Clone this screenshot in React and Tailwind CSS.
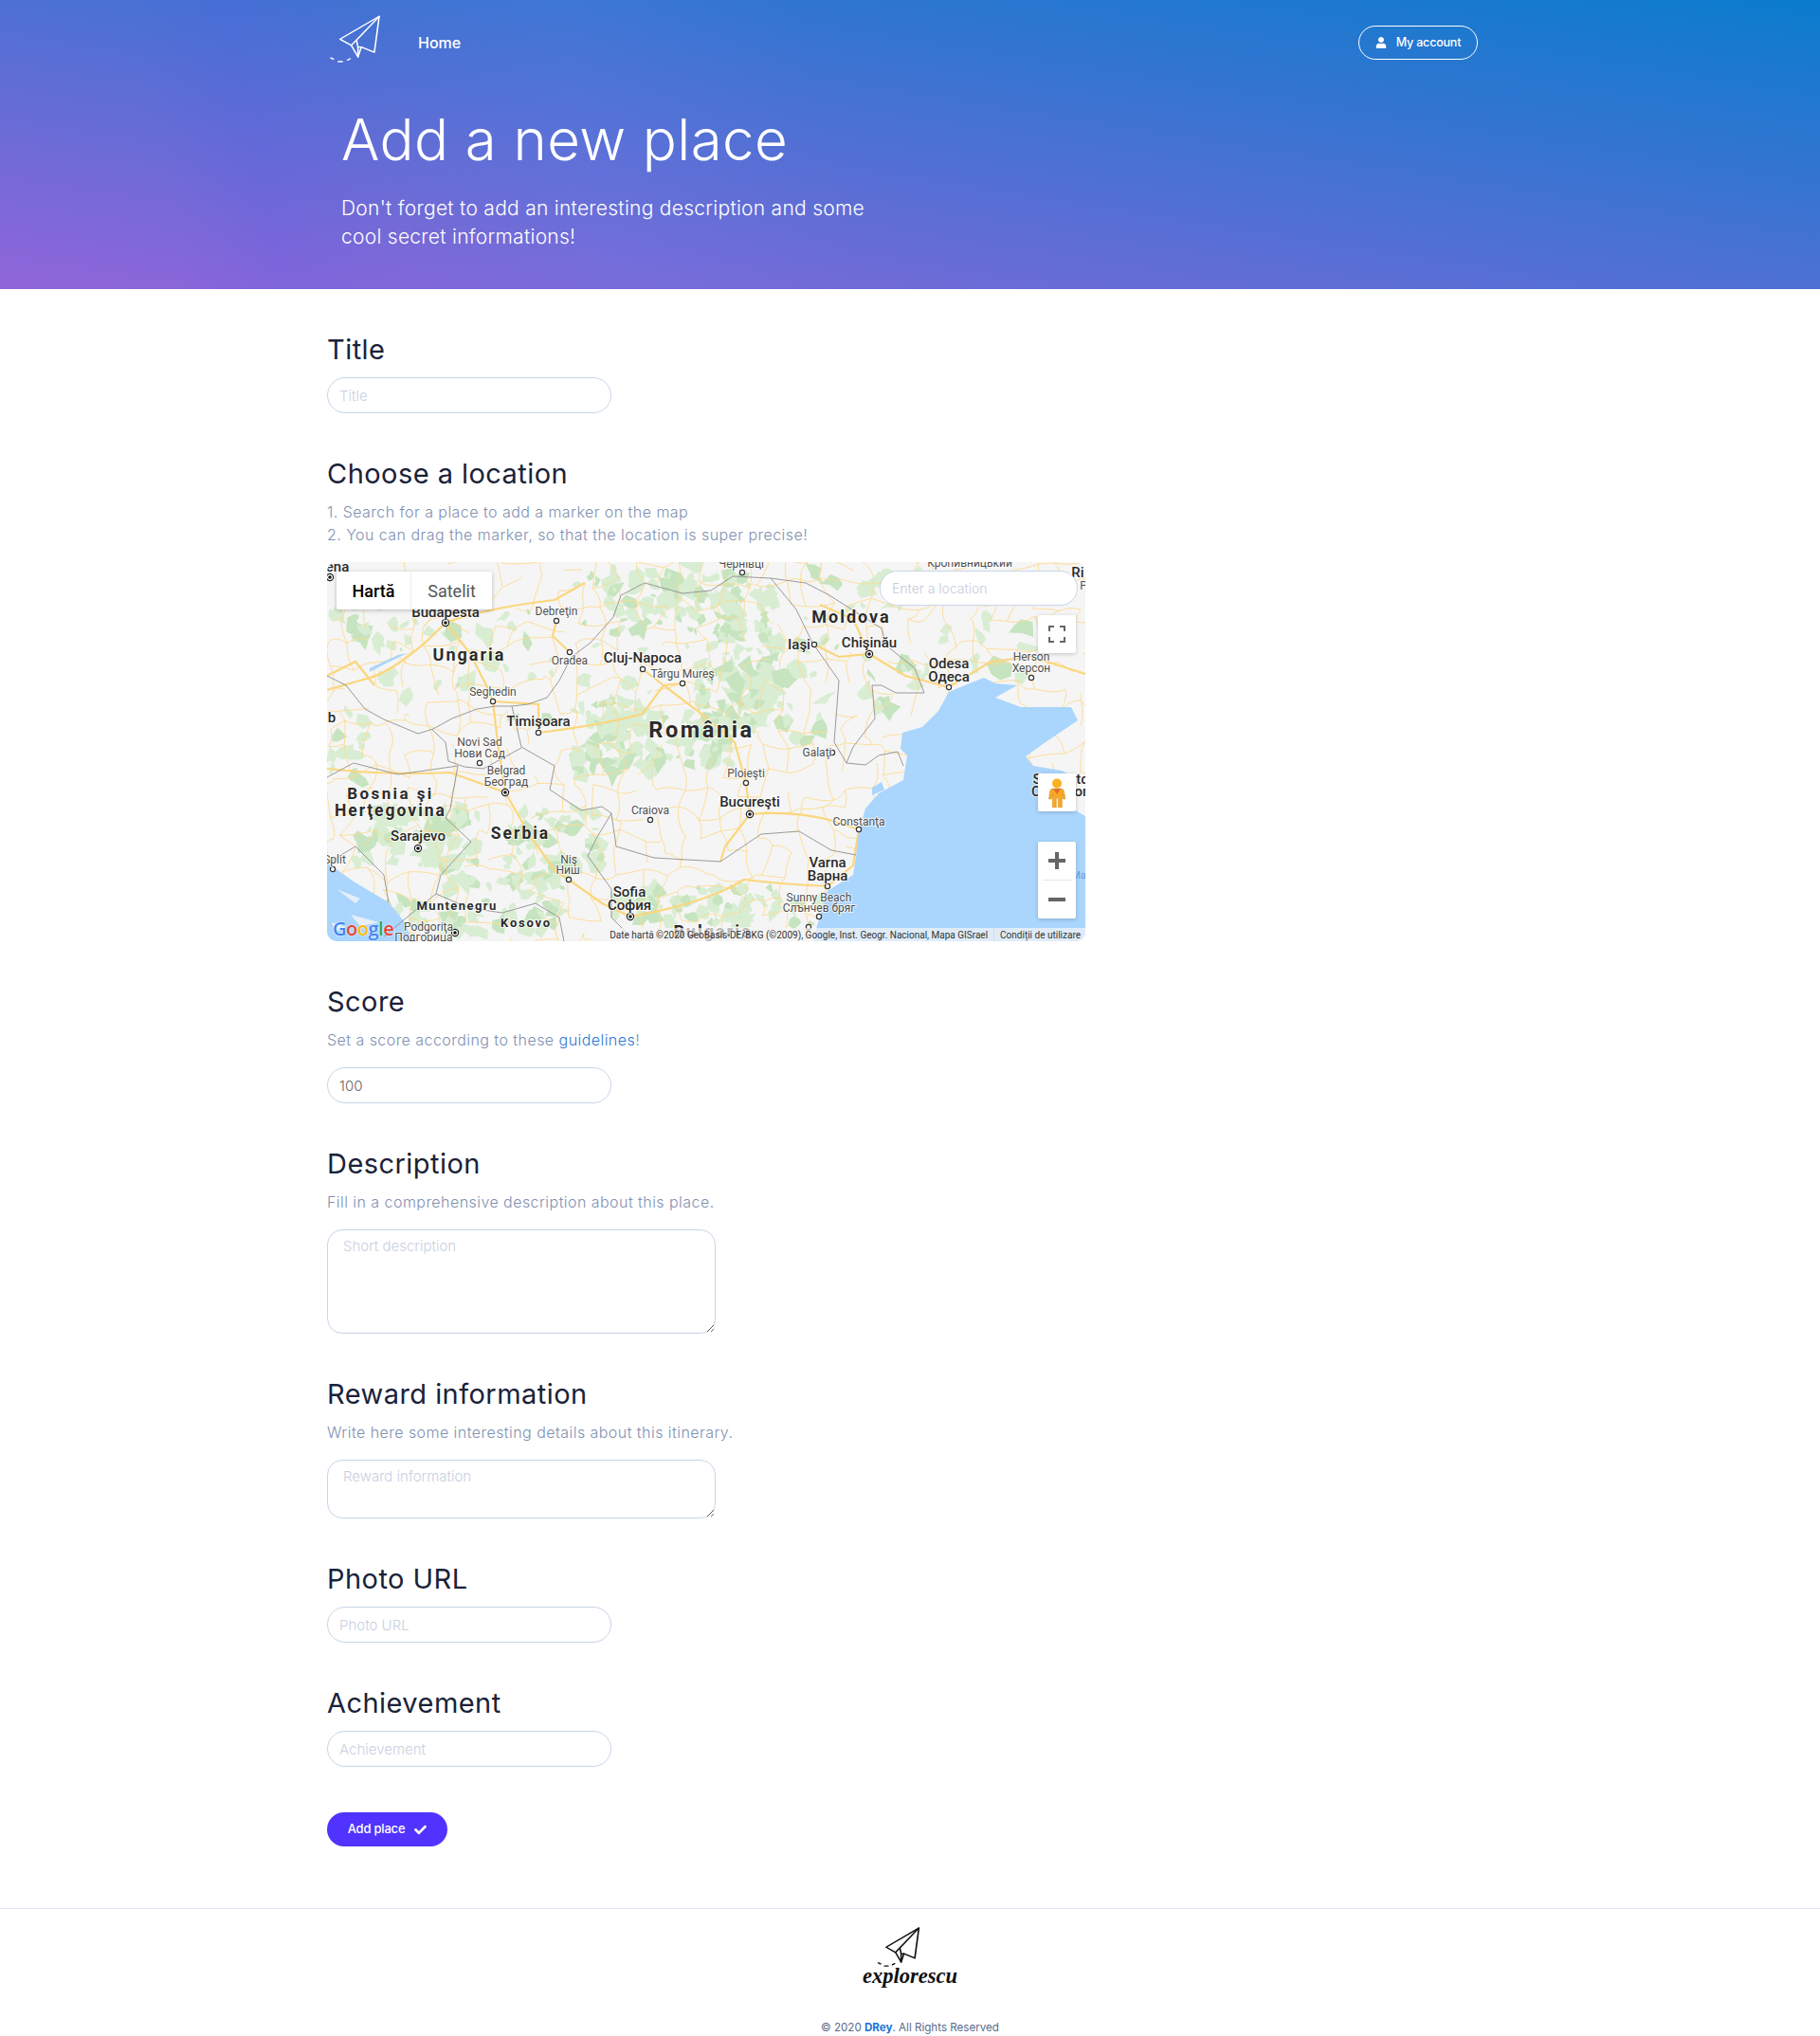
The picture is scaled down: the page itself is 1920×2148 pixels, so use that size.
import React from "react";
import { FaUser, FaCheck } from "react-icons/fa";

const F = { fontFamily: "Inter, 'Noto Sans', sans-serif" };

function rng(seed) {
  let s = seed;
  return () => {
    s = (s * 16807) % 2147483647;
    return (s - 1) / 2147483646;
  };
}

function patches() {
  const r = rng(4242);
  const clusters = [
    [370, 40, 70, 35, 70], [445, 70, 28, 50, 54], [430, 140, 40, 35, 60], [350, 190, 75, 28, 70], [290, 185, 30, 40, 40],
    [95, 290, 65, 30, 70], [240, 300, 50, 40, 56], [190, 360, 60, 30, 50], [390, 360, 90, 20, 56], [520, 370, 30, 14, 16],
    [80, 370, 30, 20, 12], [20, 200, 25, 40, 16], [50, 60, 45, 30, 20], [500, 130, 30, 60, 20], [600, 30, 60, 20, 14],
    [400, 100, 140, 100, 40], [150, 110, 110, 60, 24], [680, 90, 100, 30, 14], [590, 130, 40, 30, 12],
  ];
  const out = [];
  clusters.forEach(([cx, cy, rx, ry, n]) => {
    for (let i = 0; i < n; i++) {
      const x = cx + (r() * 2 - 1) * rx;
      const y = cy + (r() * 2 - 1) * ry;
      const size = 3 + r() * 10;
      const pts = [];
      const k = 5 + Math.floor(r() * 4);
      const rot = r() * 6.28;
      const sq = 0.4 + r() * 0.6;
      for (let j = 0; j < k; j++) {
        const a = (j / k) * Math.PI * 2;
        const d = size * (0.4 + r() * 1.0);
        const px = Math.cos(a) * d;
        const py = Math.sin(a) * d * sq;
        pts.push(`${(x + px * Math.cos(rot) - py * Math.sin(rot)).toFixed(1)},${(y + px * Math.sin(rot) + py * Math.cos(rot)).toFixed(1)}`);
      }
      out.push({ pts: pts.join(" "), c: r() > 0.65 ? "#c6e4bf" : "#d8edd2" });
    }
  });
  return out;
}

function network() {
  const r = rng(977);
  const step = 22;
  const nodes = {};
  for (let i = 0; i <= 37; i++) for (let j = 0; j <= 19; j++) {
    nodes[i + "," + j] = [i * step + (r() - 0.5) * 18, j * step + (r() - 0.5) * 18];
  }
  const out = [];
  for (let i = 0; i <= 37; i++) for (let j = 0; j <= 19; j++) {
    const a = nodes[i + "," + j];
    [[i + 1, j], [i, j + 1]].forEach(([u, v]) => {
      const b = nodes[u + "," + v];
      if (b && r() < 0.62) {
        const mx = (a[0] + b[0]) / 2 + (r() - 0.5) * 14;
        const my = (a[1] + b[1]) / 2 + (r() - 0.5) * 14;
        out.push(`M${a[0].toFixed(1)} ${a[1].toFixed(1)}Q${mx.toFixed(1)} ${my.toFixed(1)} ${b[0].toFixed(1)} ${b[1].toFixed(1)}`);
      }
    });
  }
  return out;
}

const PATCHES = patches();
const NET = network();

const MAIN = [
  "M125 64 Q105 85 85 100 Q60 118 45 122 L0 135",
  "M125 64 L150 95 L168 130 L175 147 L180 190 L188 243",
  "M125 64 Q170 48 240 40 L272 22",
  "M242 62 L238 78 L256 95",
  "M0 218 Q60 225 130 222 L188 243",
  "M188 243 L215 290 L240 325 L255 335 L290 360 L320 374",
  "M175 147 L223 150 L223 180",
  "M223 180 Q290 172 333 160 L355 130 L375 128",
  "M333 113 L355 130",
  "M446 266 L442 233 L430 190 L395 160 L355 130",
  "M446 266 Q490 262 530 272 L561 282",
  "M446 266 L420 300 L415 316",
  "M528 342 Q480 340 440 335 Q400 360 320 374",
  "M514 87 L540 100 L572 97 L610 120 L656 132",
  "M656 132 L700 105 L743 100 L800 118",
  "M572 97 L555 60 L520 45",
  "M561 282 L555 320 L528 342",
  "M0 120 L30 105 L50 130",
];
const BORDERS = [
  "M310 35 L302 58 L278 85 L258 100 L245 125 L232 143 L212 150 L195 152 L178 152 L158 155 L132 165 L112 176 L96 181 L60 166 L40 155 L20 130 L0 120",
  "M310 35 L335 22 L375 33 L405 30 L428 15 L468 17",
  "M468 17 L495 50 L512 85 L540 125 L535 190 L548 212 L568 214 L582 204 L602 200 L608 215",
  "M468 17 L505 22 L530 35 L585 70 L590 88 L620 112 L630 138 L600 138 L585 130 L575 130 L578 165 L555 195 L548 212",
  "M110 176 L125 190 L128 210 L145 216 L165 218 L205 196",
  "M195 152 L205 195 L240 215 L235 240 L268 262 L290 258 L300 265",
  "M0 227 L28 212 L75 224 L138 215",
  "M138 215 L130 260 L125 270 L152 295 L120 330 L115 350 L150 365 L185 370 L220 360 L245 375 L250 400",
  "M300 265 L285 290 L275 310 L300 345 L300 375 L325 400",
  "M300 265 L305 300 L345 312 L415 316 L458 287 L498 284 L532 304 L558 309",
  "M60 395 L90 370 L115 350",
  "M0 318 L30 300 L60 330 L65 359",
];
const SEA = "M512 400 L528 347 L555 330 L558 310 L561 284 L568 260 L582 244 L608 230 L612 204 L605 197 L607 180 L628 174 L645 157 L656 137 L680 127 L693 122 L705 128 L728 130 L705 143 L732 153 L785 153 L792 167 L755 192 L737 205 L745 215 L775 220 L790 228 L790 262 L800 268 L800 400 Z";

const L = [
  ["ena", 11, 5, 2], ["b", 5, 164, 2],
  ["Budapesta", 125, 53, 2], ["Debreţin", 242, 52, 0], ["Oradea", 256, 104, 0], ["Cluj-Napoca", 333, 101, 2],
  ["Târgu Mureş", 375, 118, 0], ["Seghedin", 175, 137, 0], ["Timişoara", 223, 168, 2], ["Novi Sad", 161, 190, 0],
  ["Нови Сад", 161, 202, 0], ["Belgrad", 189, 220, 0], ["Београд", 189, 232, 0], ["Craiova", 341, 262, 0],
  ["Sarajevo", 96, 289, 2], ["Split", 8, 314, 0], ["Niş", 255, 314, 0], ["Ниш", 254, 325, 0], ["Sofia", 319, 348, 2],
  ["София", 319, 362, 2], ["Podgoriţa", 107, 385, 0], ["Подгорица", 102, 396, 0],
  ["Чернівці", 437, 2, 0], ["Кропивницький", 678, 1, 0], ["Iaşi", 498, 87, 2], ["Chişinău", 572, 85, 2],
  ["Odesa", 656, 107, 2], ["Одеса", 656, 121, 2], ["Herson", 743, 100, 0], ["Херсон", 743, 112, 0],
  ["Galaţi", 517, 201, 0], ["Ploieşti", 442, 223, 0], ["Bucureşti", 446, 253, 2], ["Constanţa", 561, 274, 0],
  ["Varna", 528, 317, 2], ["Варна", 528, 331, 2], ["Sunny Beach", 519, 354, 0], ["Слънчев бряг", 519, 365, 0],
  ["Ri", 792, 11, 2], ["P", 798, 25, 0], ["S", 749, 229, 2], ["to", 797, 229, 2], ["C", 748, 242, 2], ["on", 797, 242, 2],
];
const B = [
  ["Ungaria", 150, 98, 18, 2], ["România", 395, 177, 23.5, 2.6], ["Bosnia şi", 67, 244, 17, 2.4], ["Herţegovina", 67, 262, 17.5, 2],
  ["Serbia", 204, 286, 17.5, 2], ["Muntenegru", 137, 362, 13, 1.4], ["Kosovo", 210, 380, 13, 1.8], ["Moldova", 553, 58, 18, 2], ["Bulgaria", 407, 390, 18, 2],
];
const HOLLOW = [[242, 62], [256, 95], [333, 113], [375, 128], [175, 147], [223, 180], [161, 212], [341, 272], [6, 324], [255, 335], [442, 233], [533, 201], [514, 87], [561, 282], [528, 342], [519, 374], [508, 385], [743, 122], [656, 132], [438, 11]];
const CAP = [[3, 16], [125, 64], [188, 243], [96, 302], [320, 374], [135, 391], [572, 97], [446, 266]];

function MapArt() {
  return (
    <svg viewBox="0 0 800 400" className="block w-full h-full" style={{ fontFamily: "Roboto, sans-serif" }}>
      <rect width="800" height="400" fill="#f5f5f5" />
      {PATCHES.map((p, i) => <polygon key={i} points={p.pts} fill={p.c} />)}
      <path d={NET.join("")} fill="none" stroke="#fddb92" strokeWidth="0.9" />
      <path d={MAIN.join("")} fill="none" stroke="#fcd67c" strokeWidth="2.2" />
      <path d="M45 112 L75 98 L85 96 L60 108 L45 116 Z" fill="#aad5fd" />
      <path d={SEA} fill="#aad5fd" />
      <path d="M0 317 L28 337 L65 359 L82 380 L90 400 L0 400 Z" fill="#aad5fd" />
      <path d="M10 345 L35 355 L30 360 Z M25 372 L55 380 L35 384 Z M5 380 L20 385 L8 390 Z" fill="#f5f5f5" opacity="0.8" />
      <path d="M575 238 L585 232 L588 240 L575 246 Z" fill="#aad5fd" />
      <path d={BORDERS.join("")} fill="none" stroke="#909090" strokeWidth="0.9" />
      {HOLLOW.map(([x, y], i) => <circle key={i} cx={x} cy={y} r="2.6" fill="#fff" stroke="#333" strokeWidth="1.2" />)}
      {CAP.map(([x, y], i) => (
        <g key={i}><circle cx={x} cy={y} r="3.6" fill="#fff" stroke="#222" strokeWidth="1.2" /><circle cx={x} cy={y} r="1.8" fill="#111" /></g>
      ))}
      {L.map(([t, x, y, k], i) => (
        <text key={i} x={x} y={y} dy="0.35em" textAnchor="middle" fontSize={k === 2 ? 15 : 12} fontWeight={k === 2 ? 500 : 400}
          fill={k === 2 ? "#2a2a2a" : "#505050"} stroke="#fff" strokeWidth="2" strokeOpacity="0.7" paintOrder="stroke">{t}</text>
      ))}
      {B.map(([t, x, y, s, ls], i) => (
        <text key={i} x={x} y={y} dy="0.35em" textAnchor="middle" fontSize={s} fontWeight="700" letterSpacing={ls}
          fill="#2b2b2b" stroke="#fff" strokeWidth="2" strokeOpacity="0.7" paintOrder="stroke">{t}</text>
      ))}
      <text x="793" y="330" dy="0.35em" textAnchor="middle" fontSize="11" fill="#6c9be0">Ma</text>
    </svg>
  );
}

function MapBox() {
  return (
    <div className="relative w-[800px] h-[400px] mt-[17px] rounded-[10px] overflow-hidden" style={{ fontFamily: "Roboto, sans-serif" }}>
      <MapArt />
      <div className="absolute left-[10px] top-[10px] w-[164px] h-[40px] flex bg-white text-[18px] shadow-[0_1px_4px_rgba(0,0,0,0.25)] rounded-[2px]">
        <div className="w-[78px] flex items-center justify-center text-black font-medium">Hartă</div>
        <div className="flex-1 flex items-center justify-center text-[#565656] border-l border-[#ececec]">Satelit</div>
      </div>
      <input placeholder="Enter a location" style={F} className="absolute left-[583px] top-[9px] w-[209px] h-[37px] rounded-full bg-white border border-[#c9d6e8] pl-[12px] text-[14px] font-light outline-none placeholder:text-[#c4cbdc]" />
      <div className="absolute left-[750px] top-[56px] w-[40px] h-[40px] bg-white rounded-[2px] shadow-[0_1px_4px_rgba(0,0,0,0.2)] flex items-center justify-center">
        <svg width="18" height="18" viewBox="0 0 18 18" fill="none" stroke="#666" strokeWidth="2"><path d="M1 6V1h5M12 1h5v5M17 12v5h-5M6 17H1v-5" /></svg>
      </div>
      <div className="absolute left-[750px] top-[223px] w-[40px] h-[40px] bg-white rounded-[2px] shadow-[0_1px_4px_rgba(0,0,0,0.2)] flex items-center justify-center">
        <svg width="18" height="31" viewBox="0 0 18 31">
          <circle cx="9" cy="5.5" r="5" fill="#fdb022" />
          <path d="M4.5 11h9c1.500 0 2.300 1 2.800 2.500L18 22h-2.500l-1.200-5v14h-4v-10H8.300v10h-4V17L3 22H.5l1.200-8.500C2.200 12 3 11 4.500 11Z" fill="#f9a825" stroke="#c98a1b" strokeWidth="0.5" />
          <path d="M5 11h8l-4 6z" fill="#e2702a" />
        </svg>
      </div>
      <div className="absolute left-[750px] top-[295px] w-[40px] h-[81px] bg-white rounded-[2px] shadow-[0_1px_4px_rgba(0,0,0,0.2)] flex flex-col items-center">
        <div className="h-[40px] flex items-center justify-center">
          <svg width="18" height="18" viewBox="0 0 18 18" fill="#666"><path d="M7 0h4v7h7v4h-7v7H7v-7H0V7h7z" /></svg>
        </div>
        <div className="w-[30px] h-px bg-[#e6e6e6]" />
        <div className="h-[40px] flex items-center justify-center">
          <svg width="18" height="18" viewBox="0 0 18 18" fill="#666"><path d="M0 7h18v4H0z" /></svg>
        </div>
      </div>
      <div className="absolute left-[6px] bottom-[1px] text-[20px] leading-[24px] font-semibold tracking-[-0.5px]" style={{ fontFamily: "'Open Sans', sans-serif", textShadow: "0 0 2px #fff" }}>
        <span className="text-[#4285f4]">G</span><span className="text-[#ea4335]">o</span><span className="text-[#fbbc05]">o</span><span className="text-[#4285f4]">g</span><span className="text-[#34a853]">l</span><span className="text-[#ea4335]">e</span>
      </div>
      <div className="absolute right-0 bottom-0 h-[14px] pl-[6px] flex items-center bg-[rgba(245,245,245,0.7)] text-[10px] text-[#333] whitespace-nowrap">
        <span>Date hartă ©2020 GeoBasis-DE/BKG (©2009), Google, Inst. Geogr. Nacional, Mapa GISrael</span>
        <span className="ml-[6px] pl-[6px] pr-[5px] border-l border-[#d5dbe2]">Condiții de utilizare</span>
      </div>
    </div>
  );
}

function Plane({ color, className, sw = 5 }) {
  return (
    <svg viewBox="65 48 140 152" preserveAspectRatio="none" className={className} fill="none" stroke={color} strokeWidth={sw} strokeLinejoin="round" strokeLinecap="round">
      <path d="M200 52 L95 125 L125 145 L143 182 L152 150 L187 167 Z" />
      <path d="M200 52 L125 145 M200 52 L139 128 L143 150 L143 182 M143 150 L152 150" />
      <path d="M70 185 L77 189 M90 197 L101 197 M115 192 L122 188" />
    </svg>
  );
}

const H = ({ children }) => <h2 className="text-[29px] leading-[34px] font-normal text-[#1a2238] tracking-[0.45px]">{children}</h2>;
const Help = ({ children, className = "" }) => <p className={"text-[16px] leading-[24px] font-light tracking-[0.45px] text-[#7f91b2] mt-[11px] " + className}>{children}</p>;
const inputCls = "block w-[300px] h-[38px] rounded-full border border-[#c9d6e8] bg-white px-[12px] text-[15px] font-light text-[#666] outline-none placeholder:text-[#c9cfdf]";
const areaCls = "block w-[410px] rounded-[16px] border border-[#c9d6e8] bg-white px-[16px] py-[6px] mt-[17px] text-[15px] font-light outline-none placeholder:text-[#c9cfdf]";

export default function App() {
  return (
    <div className="bg-white min-h-[2148px]" style={F}>
      <header className="h-[305px] bg-[linear-gradient(78deg,rgba(70,80,235,0)_10%,rgba(70,80,235,0.1)_15%,rgba(70,80,235,0)_22%,rgba(110,140,245,0.1)_33%,rgba(110,140,245,0)_46%),linear-gradient(to_top_right,#9165da,#0a7ccd)] text-white">
        <div className="w-[1230px] mx-auto">
          <nav className="h-[90px] flex items-center pr-[16px]">
            <Plane color="#fff" sw={4} className="w-[55px] h-[50px] ml-[2px] -mt-[8px]" />
            <a className="ml-[39px] text-[16px] font-medium">Home</a>
            <button className="ml-auto w-[126px] h-[36px] rounded-full border border-white flex items-center justify-center gap-[10px] text-[12.500px] font-medium tracking-[-0.2px]">
              <FaUser className="w-[12px] h-[12px]" />
              My account
            </button>
          </nav>
          <div className="pl-[15px]">
            <h1 className="mt-[21px] text-[60px] leading-[72px] font-light tracking-[0.4px]">Add a new place</h1>
            <p className="mt-[22px] text-[21px] leading-[30px] font-light tracking-[0.27px]">
              Don't forget to add an interesting description and some<br />cool secret informations!
            </p>
          </div>
        </div>
      </header>

      <main className="w-[1230px] mx-auto pt-[47px]">
        <section className="mb-[47px]">
          <H>Title</H>
          <input placeholder="Title" className={inputCls + " mt-[12px]"} />
        </section>
        <section className="mb-[47px]">
          <H>Choose a location</H>
          <Help>1. Search for a place to add a marker on the map<br />2. You can drag the marker, so that the location is super precise!</Help>
          <MapBox />
        </section>
        <section className="mb-[47px]">
          <H>Score</H>
          <Help>Set a score according to these <a className="text-[#2f78d6]">guidelines</a>!</Help>
          <input defaultValue="100" className={inputCls + " mt-[17px]"} />
        </section>
        <section className="mb-[47px]">
          <H>Description</H>
          <Help>Fill in a comprehensive description about this place.</Help>
          <textarea placeholder="Short description" className={areaCls + " h-[110px]"} />
        </section>
        <section className="mb-[47px]">
          <H>Reward information</H>
          <Help>Write here some interesting details about this itinerary.</Help>
          <textarea placeholder="Reward information" className={areaCls + " h-[62px]"} />
        </section>
        <section className="mb-[47px]">
          <H>Photo URL</H>
          <input placeholder="Photo URL" className={inputCls + " mt-[12px]"} />
        </section>
        <section className="mb-[48px]">
          <H>Achievement</H>
          <input placeholder="Achievement" className={inputCls + " mt-[12px]"} />
        </section>
        <button className="w-[127px] h-[36px] rounded-full bg-[#5033ff] text-white flex items-center justify-center gap-[10px] text-[13px] font-medium tracking-[-0.2px]">
          Add place
          <FaCheck className="w-[13px] h-[13px]" />
        </button>
      </main>

      <footer className="mt-[65px] border-t border-[#dde5f1] flex flex-col items-center">
        <Plane color="#111" sw={5} className="w-[46px] h-[42px] mt-[19px] -ml-[24px]" />
        <div className="text-[22.500px] leading-[26px] font-bold italic text-[#111] -mt-[3px]" style={{ fontFamily: "'Liberation Serif', serif" }}>explorescu</div>
        <p className="mt-[32px] text-[11.600px] leading-[18px] text-[#5a6b8c]">© 2020 <a className="text-[#1b74d8] font-bold">DRey</a>. All Rights Reserved</p>
      </footer>
    </div>
  );
}
